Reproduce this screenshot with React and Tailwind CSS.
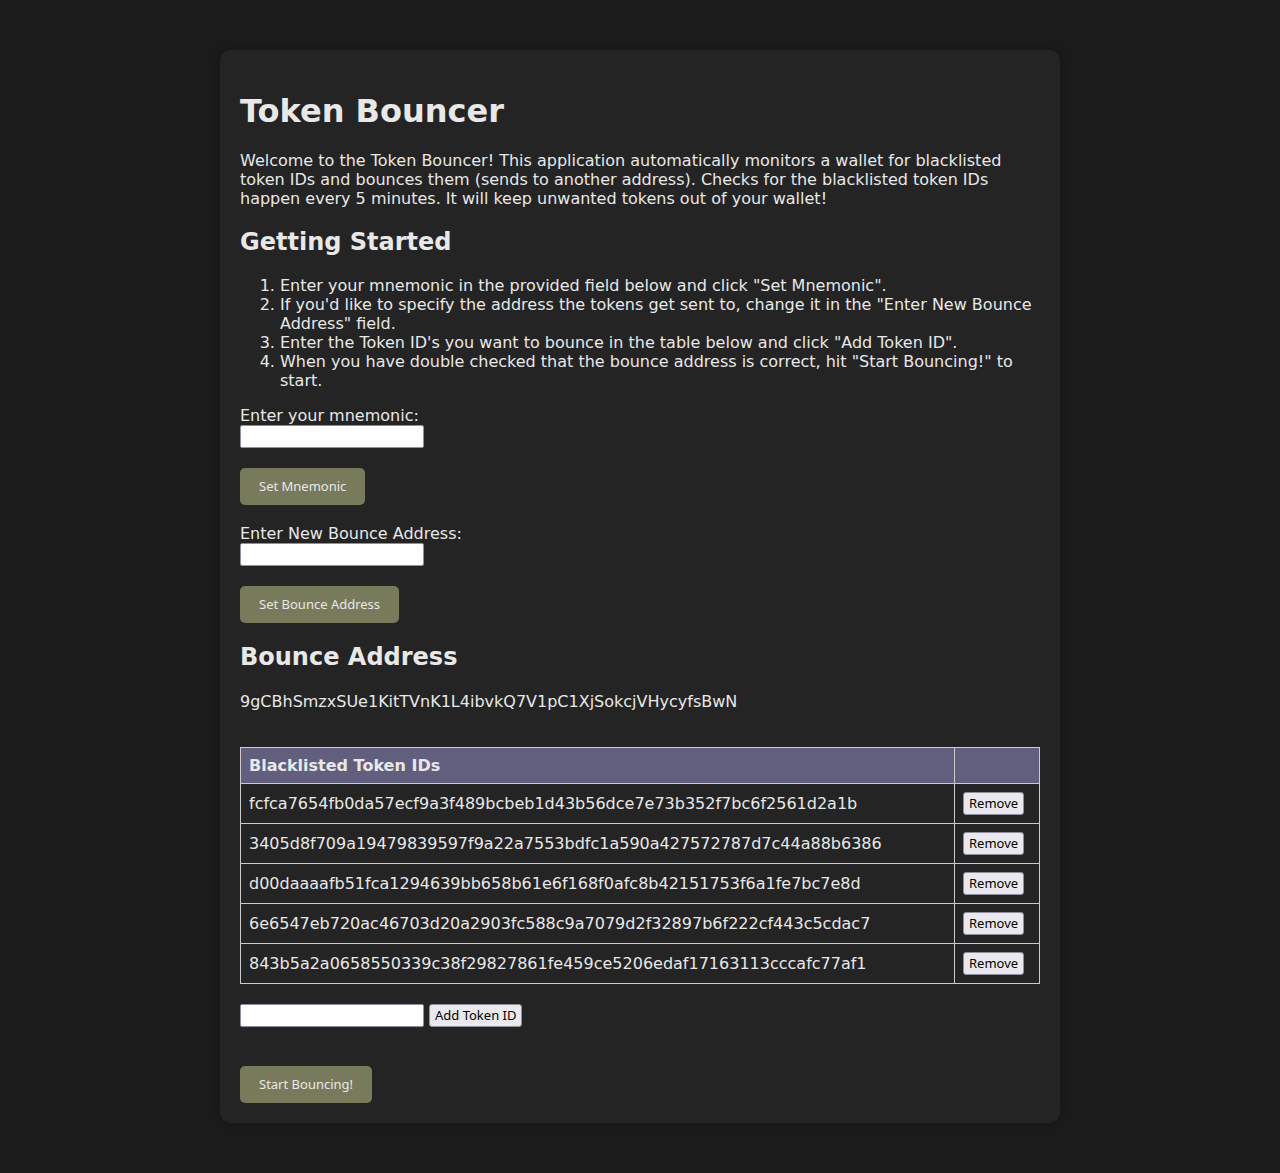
import React, { useState } from 'react'

const initialTokens = [
  'fcfca7654fb0da57ecf9a3f489bcbeb1d43b56dce7e73b352f7bc6f2561d2a1b',
  '3405d8f709a19479839597f9a22a7553bdfc1a590a427572787d7c44a88b6386',
  'd00daaaafb51fca1294639bb658b61e6f168f0afc8b42151753f6a1fe7bc7e8d',
  '6e6547eb720ac46703d20a2903fc588c9a7079d2f32897b6f222cf443c5cdac7',
  '843b5a2a0658550339c38f29827861fe459ce5206edaf17163113cccafc77af1',
]

const inputCls =
  'block w-[184px] h-[23px] bg-white text-black border border-[#8f8f9d] rounded-[2px] px-[2px] text-[13px] outline-none'

const actionBtn =
  'bg-[#787a5c] text-[#e8e8e8] text-[13px] font-[system-ui,sans-serif] px-[19px] h-[37px] rounded-[5px] cursor-pointer'

const nativeBtn =
  'bg-[#e9e9ed] text-black text-[13px] font-[system-ui,sans-serif] border border-[#8f8f9d] rounded-[3px] px-[5px] h-[23px] leading-none cursor-pointer'

export default function App() {
  const [tokens, setTokens] = useState(initialTokens)
  const [newToken, setNewToken] = useState('')
  const [address] = useState('9gCBhSmzxSUe1KitTVnK1L4ibvkQ7V1pC1XjSokcjVHycyfsBwN')

  const addToken = () => {
    if (!newToken.trim()) return
    setTokens([...tokens, newToken.trim()])
    setNewToken('')
  }

  return (
    <div className="min-h-screen bg-[#1b1b1b] py-[50px] font-['DejaVu_Sans',sans-serif] text-[#e8e8e8] text-base">
      <div className="mx-auto w-[840px] bg-[#242424] rounded-[10px] p-5 shadow-[0_0_10px_rgba(0,0,0,0.3)]">
        <h1 className="text-[32px] font-bold mt-[21.5px] mb-[21.5px] leading-[38px]">Token Bouncer</h1>
        <p className="leading-[19px]">
          Welcome to the Token Bouncer! This application automatically monitors a wallet for blacklisted
          token IDs and bounces them (sends to another address). Checks for the blacklisted token IDs
          happen every 5 minutes. It will keep unwanted tokens out of your wallet!
        </p>

        <h2 className="text-2xl font-bold mt-5 mb-5 leading-[28px]">Getting Started</h2>
        <ol className="list-decimal pl-10 leading-[19px]">
          <li>Enter your mnemonic in the provided field below and click "Set Mnemonic".</li>
          <li>
            If you'd like to specify the address the tokens get sent to, change it in the "Enter New Bounce
            Address" field.
          </li>
          <li>Enter the Token ID's you want to bounce in the table below and click "Add Token ID".</li>
          <li>When you have double checked that the bounce address is correct, hit "Start Bouncing!" to start.</li>
        </ol>

        <div className="mt-4">
          <label className="block leading-[19px]">Enter your mnemonic:</label>
          <input type="text" className={inputCls} />
          <button className={`${actionBtn} mt-5`}>Set Mnemonic</button>
        </div>

        <div className="mt-[19px]">
          <label className="block leading-[19px]">Enter New Bounce Address:</label>
          <input type="text" className={inputCls} />
          <button className={`${actionBtn} mt-5`}>Set Bounce Address</button>
        </div>

        <h2 className="text-2xl font-bold mt-5 mb-[21px] leading-[28px]">Bounce Address</h2>
        <p className="leading-[19px]">{address}</p>

        <table className="w-full border-collapse mt-[36px]">
          <thead>
            <tr className="bg-[#625f7e]">
              <th className="border border-[#cccccc] text-left font-bold px-2 py-2 leading-[19px]">
                Blacklisted Token IDs
              </th>
              <th className="border border-[#cccccc] w-[85px]"></th>
            </tr>
          </thead>
          <tbody>
            {tokens.map((t, i) => (
              <tr key={i}>
                <td className="border border-[#cccccc] px-2 py-2 leading-[19px]">{t}</td>
                <td className="border border-[#cccccc] px-2 py-2">
                  <button
                    className={`${nativeBtn} block`}
                    onClick={() => setTokens(tokens.filter((_, j) => j !== i))}
                  >
                    Remove
                  </button>
                </td>
              </tr>
            ))}
          </tbody>
        </table>

        <div className="mt-5 flex items-center gap-[5px]">
          <input
            type="text"
            value={newToken}
            onChange={(e) => setNewToken(e.target.value)}
            className={inputCls}
          />
          <button className={nativeBtn} onClick={addToken}>
            Add Token ID
          </button>
        </div>

        <button className={`${actionBtn} mt-[39px]`}>Start Bouncing!</button>
      </div>
    </div>
  )
}
